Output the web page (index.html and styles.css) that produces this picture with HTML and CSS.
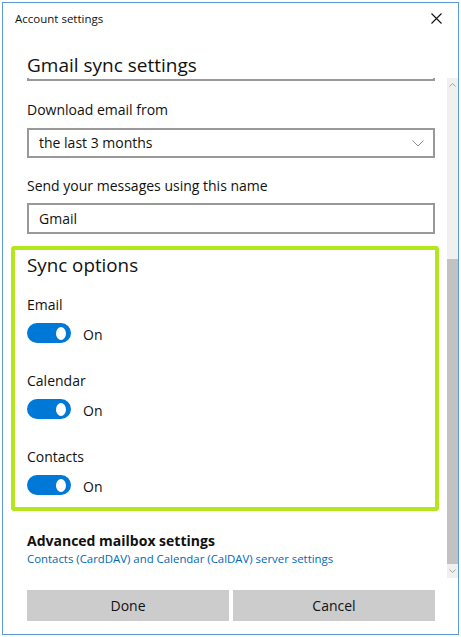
FILE: index.html
```html
<!DOCTYPE html>
<html lang="en">
<head>
    <meta charset="UTF-8">
    <title>Account settings</title>
    <link rel="stylesheet" href="styles.css">
</head>
<body>
    <div class="window">
        <div class="titlebar">
            <span class="title">Account settings</span>
            <svg class="close" width="11" height="11" viewBox="0 0 11 11">
                <path d="M0.5 0.5 L10.5 10.5 M10.5 0.5 L0.5 10.5" stroke="#111" stroke-width="1.1" fill="none"/>
            </svg>
        </div>
        <h1 class="page-title">Gmail sync settings</h1>
        <div class="scroll-area">
            <div class="scroll-content">
                <div class="field-stub"></div>

                <div class="field-label first">Download email from</div>
                <div class="select">
                    <span>the last 3 months</span>
                    <svg width="12" height="7" viewBox="0 0 12 7">
                        <path d="M0.5 0.5 L6 6 L11.5 0.5" stroke="#888" stroke-width="1" fill="none"/>
                    </svg>
                </div>

                <div class="field-label">Send your messages using this name</div>
                <div class="textbox">Gmail</div>

                <section class="sync-options">
                    <h2>Sync options</h2>
                    <div class="toggle-item">
                        <div class="toggle-label">Email</div>
                        <div class="toggle-row"><span class="toggle"><span class="knob"></span></span><span>On</span></div>
                    </div>
                    <div class="toggle-item">
                        <div class="toggle-label">Calendar</div>
                        <div class="toggle-row"><span class="toggle"><span class="knob"></span></span><span>On</span></div>
                    </div>
                    <div class="toggle-item">
                        <div class="toggle-label">Contacts</div>
                        <div class="toggle-row"><span class="toggle"><span class="knob"></span></span><span>On</span></div>
                    </div>
                </section>

                <div class="advanced">
                    <h3>Advanced mailbox settings</h3>
                    <a href="#">Contacts (CardDAV) and Calendar (CalDAV) server settings</a>
                </div>
            </div>
            <div class="scrollbar">
                <div class="sb-arrow">
                    <svg width="7" height="4" viewBox="0 0 7 4"><path d="M0.5 3.5 L3.5 0.5 L6.5 3.5" stroke="#a0a0a0" fill="none"/></svg>
                </div>
                <div class="sb-track"><div class="sb-thumb"></div></div>
                <div class="sb-arrow">
                    <svg width="7" height="4" viewBox="0 0 7 4"><path d="M0.5 0.5 L3.5 3.5 L6.5 0.5" stroke="#a0a0a0" fill="none"/></svg>
                </div>
            </div>
        </div>
        <div class="footer">
            <button>Done</button>
            <button>Cancel</button>
        </div>
    </div>
</body>
</html>
```

FILE: styles.css
```css
body {
    margin: 0;
    background: #fff;
    font-family: "Open Sans", "Noto Sans", sans-serif;
    color: #111;
}
.window {
    box-sizing: border-box;
    width: 457px;
    height: 633px;
    margin: 2px 2px 0 2px;
    border: 1px solid #5b9bd5;
    background: #fff;
    display: flex;
    flex-direction: column;
}
.titlebar {
    height: 30px;
    display: flex;
    align-items: center;
    justify-content: space-between;
    padding: 0 16px 0 12px;
}
.title {
    font-size: 11.5px;
}
.page-title {
    margin: 0;
    padding: 19px 0 0 24px;
    height: 26px;
    font-size: 19px;
    font-weight: 400;
    line-height: 26px;
}
.scroll-area {
    height: 500px;
    display: flex;
}
.scroll-content {
    flex: 1;
    overflow: hidden;
    padding: 0 12px 0 24px;
    font-size: 14px;
    line-height: 20px;
}
.field-stub {
    height: 1px;
    border: 2px solid #999;
    border-top: none;
}
.field-label {
    margin-top: 18px;
}
.field-label.first {
    margin-top: 19px;
}
.select, .textbox {
    box-sizing: border-box;
    height: 30px;
    border: 2px solid #999;
    padding: 0 9px 0 10px;
    display: flex;
    align-items: center;
    justify-content: space-between;
    margin-top: 8px;
}
.textbox {
    height: 31px;
    margin-top: 7px;
}
.sync-options {
    margin: 12px -4px 0 -16px;
    border: 4px solid #b5e51d;
    border-radius: 3px;
    padding: 2px 12px 12px;
}
.sync-options h2 {
    margin: 0;
    font-size: 18.8px;
    font-weight: 400;
    line-height: 27px;
}
.toggle-item {
    margin-top: 28px;
}
.toggle-item:first-of-type {
    margin-top: 16px;
}
.toggle-row {
    margin-top: 8px;
    display: flex;
    align-items: center;
    gap: 12px;
    height: 20px;
}
.toggle-row span:last-child {
    padding-top: 3px;
}
.toggle {
    width: 44px;
    height: 20px;
    border-radius: 10px;
    background: #0078d7;
    display: flex;
    align-items: center;
    justify-content: flex-end;
    padding-right: 5px;
    box-sizing: border-box;
}
.knob {
    width: 10px;
    height: 10px;
    border-radius: 50%;
    background: #fff;
}
.advanced {
    margin-top: 20px;
}
.advanced h3 {
    margin: 0;
    font-size: 14px;
    font-weight: 700;
    line-height: 20px;
}
.advanced a {
    display: block;
    font-size: 11.4px;
    line-height: 16px;
    color: #0067b8;
    text-decoration: none;
}
.scrollbar {
    width: 11px;
    background: #f0f0f0;
    display: flex;
    flex-direction: column;
}
.sb-arrow {
    height: 14px;
    display: flex;
    align-items: center;
    justify-content: center;
}
.sb-track {
    flex: 1;
    display: flex;
    flex-direction: column;
}
.sb-thumb {
    flex: 1;
    margin-top: 167px;
    background: #c2c2c2;
}
.footer {
    display: flex;
    gap: 4px;
    padding: 12px 23px 0 24px;
}
.footer button {
    flex: 1;
    height: 31px;
    border: none;
    background: #ccc;
    font-family: inherit;
    font-size: 14px;
    color: #111;
}
```
